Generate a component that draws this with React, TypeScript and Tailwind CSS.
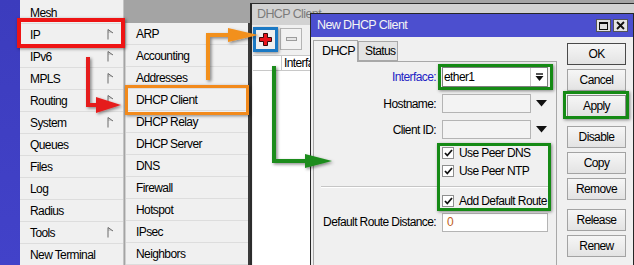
import React from "react";

const MenuArrow = () => (
  <svg width="7" height="11" viewBox="0 0 7 11" className="shrink-0">
    <path d="M1 0.5 L6 4 L1 4 Z" fill="#d0d0d0" />
    <path d="M1 0.5 V10.5 M1 0.5 L6 4" stroke="#6a6a6a" strokeWidth="1" fill="none" />
  </svg>
);

const MenuRow = ({ label, arrow }: { label: string; arrow?: boolean }) => (
  <div className="h-[22px] flex items-center justify-between pl-[10px] pr-[9px] border-b border-[#dddddd]">
    <span>{label}</span>
    {arrow && <MenuArrow />}
  </div>
);

const SubRow = ({ label }: { label: string }) => (
  <div className="h-[22px] flex items-center pl-[10px] border-b border-[#dddddd]">
    <span>{label}</span>
  </div>
);

const Btn = ({ label, cls }: { label: string; cls?: string }) => (
  <div
    className={
      "w-[59px] h-[22px] flex items-center justify-center bg-gradient-to-b from-[#f6f6f6] to-[#e3e3e3] border " +
      (cls ?? "border-[#a3a3a3]")
    }
  >
    {label}
  </div>
);

const Check = () => (
  <div className="w-[12px] h-[12px] bg-white border border-[#8e8f8f] flex items-center justify-center shrink-0">
    <svg width="9" height="8" viewBox="0 0 9 8">
      <path d="M1 4 L3.3 6.5 L8 1" stroke="#111" strokeWidth="1.8" fill="none" />
    </svg>
  </div>
);

const DownTri = () => (
  <svg width="11" height="7" viewBox="0 0 11 7" className="shrink-0">
    <path d="M0 0 H11 L5.5 6.5 Z" fill="#111" />
  </svg>
);

export default function App() {
  const menu: [string, boolean][] = [
    ["Mesh", false],
    ["IP", true],
    ["IPv6", true],
    ["MPLS", true],
    ["Routing", true],
    ["System", true],
    ["Queues", false],
    ["Files", false],
    ["Log", false],
    ["Radius", false],
    ["Tools", true],
    ["New Terminal", false],
  ];
  const sub = [
    "ARP",
    "Accounting",
    "Addresses",
    "DHCP Client",
    "DHCP Relay",
    "DHCP Server",
    "DNS",
    "Firewall",
    "Hotspot",
    "IPsec",
    "Neighbors",
  ];

  return (
    <div className="relative w-[634px] h-[265px] overflow-hidden bg-[#a4a4a4] font-['Liberation_Sans',Arial,sans-serif] text-[12px] tracking-[-0.6px] text-black leading-none">
      <div className="flex h-full">
        {/* blue strip */}
        <div className="w-[20px] h-full bg-gradient-to-b from-[#3c3cbd] to-[#4242c9]" />
        {/* main menu */}
        <div className="w-[104px] h-full bg-[#f0f0f0] border-r border-[#c4c4c4] pt-[2px]">
          {menu.map(([l, a]) => (
            <MenuRow key={l} label={l} arrow={a} />
          ))}
        </div>
        {/* submenu column */}
        <div className="w-[126px] h-full flex flex-col">
          <div className="h-[23px] shrink-0" />
          <div className="flex-1 ml-[1px] bg-[#f0f0f0] border-r-2 border-[#3a3a3a] border-l border-l-[#cfcfcf]">
            {sub.map((s) => (
              <SubRow key={s} label={s} />
            ))}
          </div>
        </div>
        {/* DHCP Client window */}
        <div className="flex-1 h-full pt-[3px]">
          <div className="h-full flex flex-col border-t border-l-2 border-[#2c2c2c] bg-[#f0f0f0]">
            <div className="h-[21px] shrink-0 bg-[#d2d2d2] flex items-center pl-[5px] text-[#7b7b7b] text-[12.5px]">
              DHCP Client
            </div>
            <div className="h-[28px] shrink-0 flex items-center pl-[4px] gap-[5px]">
              <div className="w-[19px] h-[19px] flex items-center justify-center bg-[#efefef]">
                <svg width="13" height="13" viewBox="0 0 13 13">
                  <path
                    d="M4.5 0.5 H8.5 V4.5 H12.5 V8.5 H8.5 V12.5 H4.5 V8.5 H0.5 V4.5 H4.5 Z"
                    fill="#e8141b"
                    stroke="#3a0a0a"
                    strokeWidth="1"
                  />
                </svg>
              </div>
              <div className="w-[22px] h-[22px] border border-[#b4b4b4] flex items-center justify-center bg-[#f2f2f2]">
                <div className="w-[11px] h-[4px] border border-[#9c9c9c] bg-[#e6e6e6]" />
              </div>
            </div>
            <div className="h-[2px] shrink-0" />
            <div className="h-[16px] shrink-0 flex bg-white border-t border-b border-[#c8c8c8] ml-[1px]">
              <div className="w-[29px] border-r border-[#c8c8c8]" />
              <div className="pl-[2px] flex items-center">Interface</div>
            </div>
            <div className="flex-1 bg-white ml-[1px]" />
          </div>
        </div>
      </div>

      {/* New DHCP Client dialog */}
      <div className="absolute left-[310px] top-[13px] w-[324px] h-[262px] border border-[#262626] bg-[#f0f0f0] flex flex-col">
        <div className="h-[23px] shrink-0 bg-[#4c4fcf] flex items-center justify-between pl-[6px] pr-[5px] text-[#f4f4f4] text-[12.5px]">
          <span>New DHCP Client</span>
          <div className="flex gap-[2px]">
            <div className="w-[15px] h-[13px] bg-[#e4e4e4] border border-[#555] flex items-center justify-center">
              <div className="w-[9px] h-[8px] border border-[#111] border-t-2" />
            </div>
            <div className="w-[15px] h-[13px] bg-[#e4e4e4] border border-[#555] flex items-center justify-center">
              <svg width="9" height="9" viewBox="0 0 9 9">
                <path d="M1 1 L8 8 M8 1 L1 8" stroke="#111" strokeWidth="1.8" />
              </svg>
            </div>
          </div>
        </div>
        <div className="flex-1 flex">
          {/* left form */}
          <div className="ml-[2px] w-[244px] pt-[3px] flex flex-col">
            <div className="flex items-end h-[22px] relative z-10">
              <div className="w-[45px] h-[22px] bg-[#f0f0f0] border border-b-0 border-[#a8a8a8] flex items-center pl-[8px] text-[12.5px]">
                DHCP
              </div>
              <div className="w-[40px] h-[20px] bg-[#e4e4e4] border border-[#a8a8a8] flex items-center pl-[6px] mb-[1px]">
                Status
              </div>
            </div>
            <div className="-mt-[1px] flex-1 border border-[#a8a8a8] flex flex-col">
              {/* Interface */}
              <div className="mt-[5px] h-[20px] flex items-center">
                <div className="w-[122px] text-right text-[#2222c4]">Interface:</div>
                <div className="ml-[6px] w-[106px] h-[20px] bg-white border border-[#7e7e7e] flex">
                  <div className="flex-1 flex items-center pl-[1px]">ether1</div>
                  <div className="w-[17px] border-l border-[#c8c8c8] flex items-center justify-center">
                    <svg width="9" height="9" viewBox="0 0 9 9">
                      <path d="M1 1 H8" stroke="#111" strokeWidth="1.4" />
                      <path d="M0.5 3 H8.5 L4.5 8 Z" fill="#111" />
                    </svg>
                  </div>
                </div>
              </div>
              {/* Hostname */}
              <div className="mt-[7px] h-[19px] flex items-center">
                <div className="w-[122px] text-right">Hostname:</div>
                <div className="ml-[6px] w-[89px] h-[19px] bg-[#f3f3f3] border border-[#b4b4b4]" />
                <div className="ml-[5px]">
                  <DownTri />
                </div>
              </div>
              {/* Client ID */}
              <div className="mt-[7px] h-[19px] flex items-center">
                <div className="w-[122px] text-right">Client ID:</div>
                <div className="ml-[6px] w-[89px] h-[19px] bg-[#f3f3f3] border border-[#b4b4b4]" />
                <div className="ml-[5px]">
                  <DownTri />
                </div>
              </div>
              <div className="mt-[5px] h-[18px] flex items-center pl-[128px] gap-[5px]">
                <Check />
                <span>Use Peer DNS</span>
              </div>
              <div className="h-[18px] flex items-center pl-[128px] gap-[5px]">
                <Check />
                <span>Use Peer NTP</span>
              </div>
              <div className="mt-[6px] mx-[7px] border-t border-[#c6c6c6] border-b border-b-white" />
              <div className="mt-[4px] h-[18px] flex items-center pl-[128px] gap-[5px]">
                <Check />
                <span>Add Default Route</span>
              </div>
              <div className="mt-[2px] h-[20px] flex items-center">
                <div className="w-[122px] text-right">Default Route Distance:</div>
                <div className="ml-[6px] w-[106px] h-[19px] bg-white border border-[#b4b4b4] flex items-center pl-[4px] text-[#c0601a]">
                  0
                </div>
              </div>
            </div>
          </div>
          {/* buttons */}
          <div className="ml-[10px] flex flex-col">
            <div className="mt-[6px]">
              <Btn label="OK" cls="border-[#4a4a4a]" />
            </div>
            <div className="mt-[4px]">
              <Btn label="Cancel" />
            </div>
            <div className="mt-[4px]">
              <Btn label="Apply" cls="border-[#8a8a8a]" />
            </div>
            <div className="mt-[9px]">
              <Btn label="Disable" />
            </div>
            <div className="mt-[4px]">
              <Btn label="Copy" />
            </div>
            <div className="mt-[4px]">
              <Btn label="Remove" />
            </div>
            <div className="mt-[9px]">
              <Btn label="Release" />
            </div>
            <div className="mt-[4px]">
              <Btn label="Renew" />
            </div>
          </div>
        </div>
      </div>

      {/* highlight boxes */}
      <div className="absolute left-[17px] top-[18px] w-[108px] h-[30px] border-[4px] border-[#ee1414] shadow-[1px_1px_3px_rgba(0,0,0,0.45)]" />
      <div className="absolute left-[125px] top-[85px] w-[124px] h-[30px] border-[3px] border-[#f28a1c] shadow-[1px_1px_3px_rgba(0,0,0,0.45)]" />
      <div className="absolute left-[253px] top-[27px] w-[25px] h-[25px] border-[3px] border-[#1b79c4] shadow-[1px_1px_3px_rgba(0,0,0,0.45)]" />
      <div className="absolute left-[438px] top-[64px] w-[115px] h-[26px] border-[3px] border-[#158a15] shadow-[1px_1px_3px_rgba(0,0,0,0.45)]" />
      <div className="absolute left-[437px] top-[143px] w-[114px] h-[68px] border-[3px] border-[#158a15] shadow-[1px_1px_3px_rgba(0,0,0,0.45)]" />
      <div className="absolute left-[563px] top-[91px] w-[66px] h-[28px] border-[3px] border-[#158a15] shadow-[1px_1px_3px_rgba(0,0,0,0.45)]" />

      {/* arrows */}
      <svg className="absolute left-0 top-0 pointer-events-none" width="634" height="265" viewBox="0 0 634 265">
        <defs>
          <filter id="sh" x="-20%" y="-20%" width="140%" height="140%">
            <feDropShadow dx="1.5" dy="1.5" stdDeviation="1.5" floodColor="#000" floodOpacity="0.45" />
          </filter>
        </defs>
        <g filter="url(#sh)">
          <polyline points="88,57 88,105 100,105" fill="none" stroke="#e51e1e" strokeWidth="4" />
          <polygon points="96,97 121,105 96,113" fill="#e51e1e" />
          <polyline points="208,80 208,35 232,35" fill="none" stroke="#f2901e" strokeWidth="4" />
          <polygon points="228,28 258,35 228,42" fill="#f2901e" />
          <polyline points="274,66 274,161 310,161" fill="none" stroke="#1c8c1c" strokeWidth="4" />
          <polygon points="305,154 332,161 305,168" fill="#1c8c1c" />
        </g>
      </svg>
    </div>
  );
}
